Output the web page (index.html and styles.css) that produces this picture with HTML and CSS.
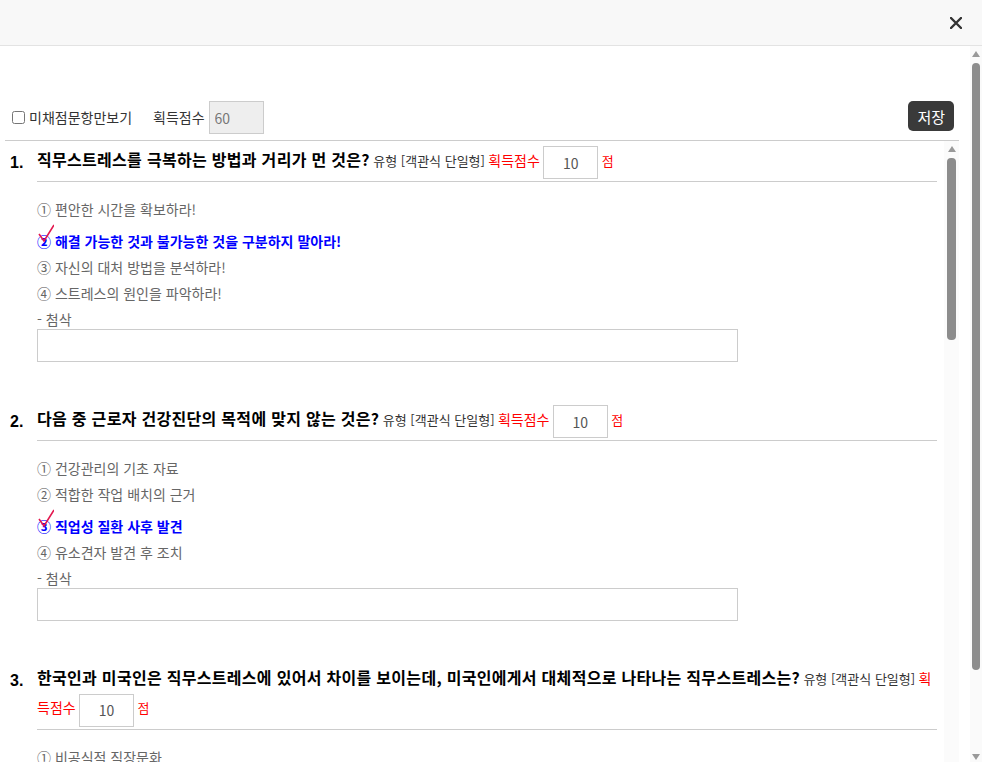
FILE: index.html
```html
<!DOCTYPE html>
<html lang="ko">
<head>
    <meta charset="UTF-8">
    <meta name="viewport" content="width=device-width, initial-scale=1.0">
    <title>채점</title>
    <link rel="stylesheet" href="styles.css">
</head>
<body>
    <div class="modal">
        <div class="modal-header">
            <button class="btn-close" type="button" aria-label="닫기">
                <svg width="12" height="12" viewBox="0 0 12 12"><path d="M1 1L11 11M11 1L1 11" stroke="#333" stroke-width="2.4" stroke-linecap="round"/></svg>
            </button>
        </div>
        <div class="modal-body">
            <div class="body-main">
                <div class="toolbar">
                    <label class="only-unscored"><input type="checkbox"> 미채점문항만보기</label>
                    <span class="total-label">획득점수</span>
                    <input class="total-score" type="text" value="60" disabled>
                    <button class="btn-save" type="button">저장</button>
                </div>
                <div class="list-wrap">
                    <div class="question-list">
                        <div class="question">
                            <div class="q-no">1.</div>
                            <div class="q-body">
                                <div class="q-head">
                                    <span class="q-title">직무스트레스를 극복하는 방법과 거리가 먼 것은?</span>
                                    <span class="q-type">유형 [객관식 단일형]</span>
                                    <span class="q-score-label">획득점수</span>
                                    <input class="q-score" type="text" value="10">
                                    <span class="q-unit">점</span>
                                </div>
                                <ul class="options">
                                    <li>① 편안한 시간을 확보하라!</li>
                                    <li class="selected"><svg class="mark" width="16" height="18" viewBox="0 0 16 18"><path d="M1 10L6 17L16 1" fill="none" stroke="#e3194f" stroke-width="1.6"/></svg>② 해결 가능한 것과 불가능한 것을 구분하지 말아라!</li>
                                    <li>③ 자신의 대처 방법을 분석하라!</li>
                                    <li>④ 스트레스의 원인을 파악하라!</li>
                                </ul>
                                <div class="comment-label">- 첨삭</div>
                                <textarea class="comment"></textarea>
                            </div>
                        </div>
                        <div class="question">
                            <div class="q-no">2.</div>
                            <div class="q-body">
                                <div class="q-head">
                                    <span class="q-title">다음 중 근로자 건강진단의 목적에 맞지 않는 것은?</span>
                                    <span class="q-type">유형 [객관식 단일형]</span>
                                    <span class="q-score-label">획득점수</span>
                                    <input class="q-score" type="text" value="10">
                                    <span class="q-unit">점</span>
                                </div>
                                <ul class="options">
                                    <li>① 건강관리의 기초 자료</li>
                                    <li>② 적합한 작업 배치의 근거</li>
                                    <li class="selected"><svg class="mark" width="16" height="18" viewBox="0 0 16 18"><path d="M1 10L6 17L16 1" fill="none" stroke="#e3194f" stroke-width="1.6"/></svg>③ 직업성 질환 사후 발견</li>
                                    <li>④ 유소견자 발견 후 조치</li>
                                </ul>
                                <div class="comment-label">- 첨삭</div>
                                <textarea class="comment"></textarea>
                            </div>
                        </div>
                        <div class="question">
                            <div class="q-no">3.</div>
                            <div class="q-body">
                                <div class="q-head">
                                    <span class="q-title">한국인과 미국인은 직무스트레스에 있어서 차이를 보이는데, 미국인에게서 대체적으로 나타나는 직무스트레스는?</span>
                                    <span class="q-type">유형 [객관식 단일형]</span>
                                    <span class="q-score-label">획득점수</span>
                                    <input class="q-score" type="text" value="10">
                                    <span class="q-unit">점</span>
                                </div>
                                <ul class="options">
                                    <li>① 비공식적 직장문화</li>
                                    <li>② 직무 불안정</li>
                                    <li class="selected"><svg class="mark" width="16" height="18" viewBox="0 0 16 18"><path d="M1 10L6 17L16 1" fill="none" stroke="#e3194f" stroke-width="1.6"/></svg>③ 관계 갈등</li>
                                    <li>④ 조직체계</li>
                                </ul>
                                <div class="comment-label">- 첨삭</div>
                                <textarea class="comment"></textarea>
                            </div>
                        </div>
                        <div class="question">
                            <div class="q-no">4.</div>
                            <div class="q-body">
                                <div class="q-head">
                                    <span class="q-title">직무스트레스 요인 중 개인적 요인에 해당하지 않는 것은?</span>
                                    <span class="q-type">유형 [객관식 단일형]</span>
                                    <span class="q-score-label">획득점수</span>
                                    <input class="q-score" type="text" value="10">
                                    <span class="q-unit">점</span>
                                </div>
                                <ul class="options">
                                    <li>① 성격 유형</li>
                                    <li class="selected"><svg class="mark" width="16" height="18" viewBox="0 0 16 18"><path d="M1 10L6 17L16 1" fill="none" stroke="#e3194f" stroke-width="1.6"/></svg>② 조직 구조</li>
                                    <li>③ 자기 존중감</li>
                                    <li>④ 대처 능력</li>
                                </ul>
                                <div class="comment-label">- 첨삭</div>
                                <textarea class="comment"></textarea>
                            </div>
                        </div>
                    </div>
                    <div class="scrollbar inner">
                        <span class="arrow up"></span>
                        <span class="thumb"></span>
                        <span class="track"></span>
                    </div>
                </div>
            </div>
            <div class="scrollbar outer">
                <span class="arrow up"></span>
                <span class="thumb"></span>
                <span class="track"></span>
                <span class="arrow down"></span>
            </div>
        </div>
    </div>
</body>
</html>
```

FILE: styles.css
```css
* {
    box-sizing: border-box;
}

body {
    margin: 0;
    background-color: #fff;
    font-family: "Noto Sans CJK KR", "Noto Sans", sans-serif;
    color: #333;
    overflow: hidden;
}

.modal {
    height: 100vh;
    display: flex;
    flex-direction: column;
}

.modal-header {
    height: 46px;
    flex: none;
    display: flex;
    justify-content: flex-end;
    align-items: center;
    padding-right: 20px;
    background-color: #f8f8f8;
    border-bottom: 1px solid #e3e3e3;
}

.btn-close {
    border: none;
    background: transparent;
    padding: 0;
    width: 12px;
    height: 12px;
    display: flex;
    cursor: pointer;
}

.modal-body {
    flex: 1;
    min-height: 0;
    display: flex;
    overflow: hidden;
}

.body-main {
    flex: 1;
    padding: 55px 11px 0 5px;
}

/* fake scrollbars (screenshots hide the native ones) */
.scrollbar {
    width: 12px;
    flex: none;
    display: flex;
    flex-direction: column;
    align-items: center;
    background-color: #fafafa;
}

.scrollbar.outer {
    padding: 5px 0 2px;
}

.scrollbar.inner {
    width: 15px;
    padding-top: 5px;
    background-color: #fbfbfb;
}

.arrow {
    width: 0;
    height: 0;
    border-left: 4px solid transparent;
    border-right: 4px solid transparent;
}

.arrow.up {
    border-bottom: 6px solid #999;
}

.arrow.down {
    border-top: 6px solid #999;
}

.thumb {
    width: 8px;
    border-radius: 4px;
    background-color: #8c8c8c;
    margin-top: 6px;
}

.outer .thumb {
    height: 607px;
}

.inner .thumb {
    width: 9px;
    height: 182px;
}

.track {
    flex: 1;
}

.toolbar {
    display: flex;
    align-items: flex-start;
    padding: 0 5px 6px 7px;
    font-size: 14px;
}

.only-unscored,
.total-label {
    line-height: 32px;
}

.only-unscored {
    display: flex;
    align-items: center;
    gap: 4px;
}

.only-unscored input {
    margin: 0;
    width: 13px;
    height: 13px;
}

.total-label {
    margin-left: 21px;
    margin-right: 4px;
}

.total-score {
    width: 55px;
    height: 33px;
    padding: 0 5px;
    border: 1px solid #ccc;
    background-color: #eee;
    color: #777;
    font-family: inherit;
    font-size: 14px;
}

.btn-save {
    margin-left: auto;
    height: 30px;
    padding: 0 9px;
    border: none;
    border-radius: 5px;
    background-color: #3a3a3a;
    color: #fff;
    font-family: inherit;
    font-size: 15px;
}

.list-wrap {
    display: flex;
    height: 720px;
    border-top: 1px solid #ccc;
}

.question-list {
    flex: 1;
    overflow: hidden;
    padding: 4px 7px 0 5px;
}

.question {
    display: flex;
    margin-bottom: 42px;
}

.q-no {
    width: 27px;
    flex: none;
    font-family: "Liberation Sans", Arial, sans-serif;
    font-weight: bold;
    font-size: 16px;
    color: #000;
    line-height: 35px;
}

.q-body {
    flex: 1;
}

.q-head {
    padding-bottom: 2px;
    border-bottom: 1px solid #ccc;
    font-size: 12px;
    line-height: 29px;
}

.q-title {
    font-size: 16px;
    font-weight: bold;
    color: #000;
    letter-spacing: 0.3px;
}

.q-type {
    font-size: 13px;
    color: #333;
}

.q-score-label {
    font-size: 14px;
    color: #f00;
}

.q-score {
    width: 55px;
    height: 33px;
    border: 1px solid #ccc;
    text-align: center;
    color: #555;
    font-family: inherit;
    font-size: 14px;
    vertical-align: middle;
}

.q-unit {
    font-size: 13px;
    color: #f00;
}

.options {
    list-style: none;
    margin: 0;
    padding: 14px 0 0;
    font-size: 14px;
    color: #666;
}

.options li {
    line-height: 26px;
    position: relative;
}

.options li.selected {
    padding-top: 6px;
    color: #00f;
    font-weight: bold;
}

.mark {
    position: absolute;
    left: 1px;
    top: 2px;
}

.comment-label {
    margin-top: 3px;
    font-size: 14px;
    color: #666;
    line-height: 20px;
}

.comment {
    display: block;
    width: 701px;
    height: 33px;
    border: 1px solid #ccc;
    resize: none;
    font-family: inherit;
}
```
